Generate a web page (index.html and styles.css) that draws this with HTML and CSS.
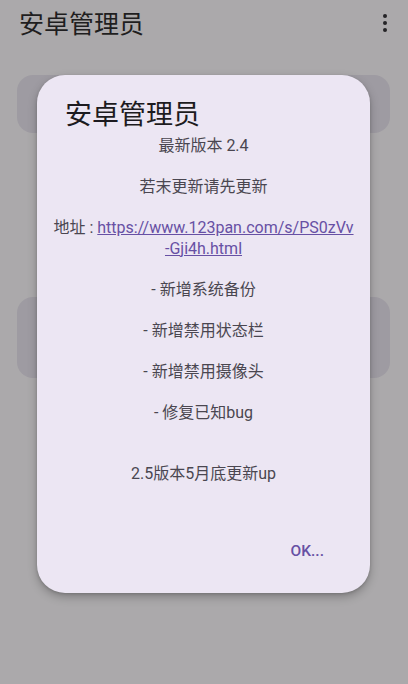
FILE: index.html
```html
<!DOCTYPE html>
<html lang="zh">
<head>
<meta charset="utf-8">
<link rel="stylesheet" href="styles.css">
</head>
<body>
<div class="app">
  <header class="appbar">
    <h1 class="appbar-title">安卓管理员</h1>
    <div class="menu" aria-label="more">
      <span class="dot"></span><span class="dot"></span><span class="dot"></span>
    </div>
  </header>
  <main class="content">
    <div class="card card-a"></div>
    <div class="card card-b"></div>
  </main>
  <div class="dialog">
    <h2 class="dialog-title">安卓管理员</h2>
    <div class="dialog-msg">
      <p>最新版本 2.4</p>
      <p class="gap">若末更新请先更新</p>
      <p class="gap">地址 : <a class="link" href="#">https://www.123pan.com/s/PS0zVv<br>-Gji4h.html</a></p>
      <p class="gap">- 新增系统备份</p>
      <p class="gap">- 新增禁用状态栏</p>
      <p class="gap">- 新增禁用摄像头</p>
      <p class="gap">- 修复已知bug</p>
      <p class="gap2">2.5版本5月底更新up</p>
    </div>
    <div class="dialog-actions">
      <button class="btn">OK...</button>
    </div>
  </div>
</div>
</body>
</html>
```
FILE: styles.css
```css
* { box-sizing: border-box; }
html, body { margin: 0; padding: 0; }
body {
  width: 408px;
  height: 684px;
  background: #aba9ab;
  font-family: "Roboto", "Noto Sans CJK SC", sans-serif;
  overflow: hidden;
}
.app {
  position: relative;
  width: 408px;
  height: 684px;
}
.appbar {
  display: flex;
  align-items: center;
  justify-content: space-between;
  height: 44px;
  padding: 0 21px 0 19px;
}
.appbar-title {
  margin: 0;
  font-size: 25px;
  font-weight: 400;
  line-height: 30px;
  color: #1f1e20;
  font-family: "Noto Sans CJK SC", sans-serif;
}
.menu {
  display: flex;
  flex-direction: column;
  gap: 2.5px;
  padding-top: 2px;
}
.dot {
  width: 4.5px;
  height: 4.5px;
  border-radius: 50%;
  background: #242326;
}
.content {
  padding: 31px 18px 0 17px;
  display: flex;
  flex-direction: column;
}
.card {
  border-radius: 16px;
  background: #9e9ba2;
}
.card-a { height: 58px; }
.card-b { height: 81px; margin-top: 164px; }

.dialog {
  position: absolute;
  left: 37px;
  top: 75px;
  width: 333px;
  height: 518px;
  background: #ece6f3;
  border-radius: 28px;
  box-shadow: 0 4px 10px rgba(0,0,0,0.25), 0 1px 3px rgba(0,0,0,0.15);
  display: flex;
  flex-direction: column;
}
.dialog-title {
  margin: 21px 0 0 28px;
  font-family: "Noto Sans CJK SC", sans-serif;
  font-size: 27px;
  font-weight: 400;
  line-height: 34px;
  color: #1d1b20;
}
.dialog-msg {
  margin-top: 6px;
  padding: 0 10px;
  text-align: center;
  font-size: 16px;
  line-height: 20.5px;
  color: #4a4650;
}
.dialog-msg p { margin: 0; }
.dialog-msg .gap { margin-top: 20.5px; }
.dialog-msg .gap2 { margin-top: 41px; }
.link {
  color: #6750a4;
  text-decoration: underline;
}
.dialog-actions {
  margin-top: auto;
  display: flex;
  justify-content: flex-end;
  padding: 0 46px 32px 0;
}
.btn {
  border: none;
  background: transparent;
  padding: 0;
  font-family: "Roboto", sans-serif;
  font-size: 15.5px;
  font-weight: 500;
  color: #6750a4;
  line-height: 20px;
}
```
